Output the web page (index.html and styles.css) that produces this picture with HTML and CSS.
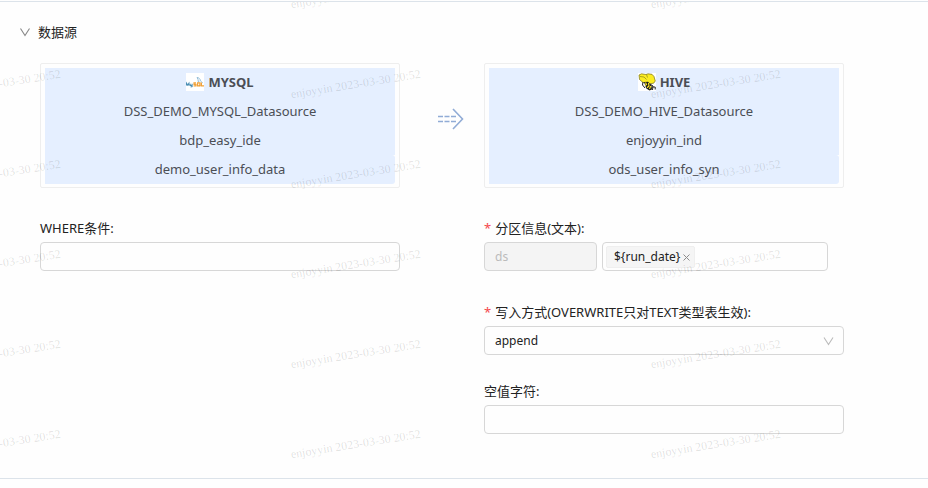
FILE: index.html
```html
<!DOCTYPE html>
<html lang="zh-CN">
<head>
<meta charset="utf-8">
<title>数据源</title>
<meta name="viewport" content="width=device-width, initial-scale=1">
<link rel="stylesheet" href="styles.css">
</head>
<body>
<main class="panel">
  <button class="panel-toggle" type="button" aria-expanded="true">
    <svg class="chevron" viewBox="0 0 12 12" width="12" height="12" aria-hidden="true"><path d="M.5 2.5 5 9.5 9.5 2.5"/></svg>
    <span>数据源</span>
  </button>
  <div class="mapping">
    <section class="side">
      <div class="card">
        <div class="row title">
          <svg width="18" height="18" viewBox="0 0 18 18" aria-hidden="true">
            <rect width="18" height="18" fill="#fff"/>
            <path d="M11 4.5c1.5 0 2.8 1 3.4 2.6.4 1.3.8 2 2.4 2.7M11 4.5l1 2 .4 2.5 1.1-1" fill="none" stroke="#7fb0cf" stroke-width=".8"/>
            <path d="M.5 12.5v-2.2l1.2 1.8 1.2-1.8v2.2M4.2 10.8v1.7h1.9v-1.7M6.1 12v1.6l-1.5.4" fill="none" stroke="#4c8fb5" stroke-width="1.1"/>
            <path d="M10 9.8H8v1.5h2v1.6H7.6M11.6 9.8h2.3v3h-2.3zM13 12l1.4 1.3M15.4 9.5v3.3H18" fill="none" stroke="#f0a13a" stroke-width="1.2"/>
          </svg>
          <strong>MYSQL</strong>
        </div>
        <div class="row">DSS_DEMO_MYSQL_Datasource</div>
        <div class="row">bdp_easy_ide</div>
        <div class="row">demo_user_info_data</div>
      </div>
      <div class="field">
        <label for="where">WHERE条件:</label>
        <input id="where" class="control" type="text">
      </div>
    </section>
    <div class="arrow">
      <svg width="26" height="22" viewBox="0 0 26 22" fill="none" stroke="#91acd6" stroke-width="1.6" aria-hidden="true">
        <path d="M0 8.5h18M0 13.5h18" stroke-dasharray="5 1.5"/>
        <path d="M15 1l9.5 10L15 21"/>
      </svg>
    </div>
    <section class="side">
      <div class="card">
        <div class="row title">
          <svg width="18" height="18" viewBox="0 0 18 18" aria-hidden="true">
            <rect width="18" height="18" fill="#fff"/>
            <path d="M1 2 3.5.8 8 1.5l2-.7 4 .5 2 2.2 1.3 4.5-1.6 2.2-3.7.6L9 9.8 5 9.6 1.5 6.5z" fill="#fbec23" stroke="#5d570f" stroke-width=".6"/>
            <path d="M2 3.5l4 .5 2.5 2.5M8.5 1.5l1 3" fill="none" stroke="#77701a" stroke-width=".6"/>
            <path d="M6 9l4-.3 3.5 3.8.5 4-2.5 1-3.2-2z" fill="#191919"/>
            <path d="M7.5 9.5l1 2-1.5 1M10.5 10l.5 3-2 1.8M12.8 13l-1.3 3" fill="none" stroke="#f6df25" stroke-width="1.2"/>
            <path d="M5 9l-.5 3L7 15M12 11l3 2-.5 4M14 14h3.2v2.5" fill="none" stroke="#222"/>
          </svg>
          <strong>HIVE</strong>
        </div>
        <div class="row">DSS_DEMO_HIVE_Datasource</div>
        <div class="row">enjoyyin_ind</div>
        <div class="row">ods_user_info_syn</div>
      </div>
      <div class="field partition">
        <label class="required" for="partition-value">分区信息(文本):</label>
        <div class="pair">
          <input class="control" type="text" value="ds" aria-label="分区字段" disabled>
          <div class="control tags">
            <span class="tag">${run_date}
              <button type="button" aria-label="移除"><svg width="7" height="7" viewBox="0 0 7 7" aria-hidden="true"><path d="M.5.5l6 6M6.5.5l-6 6"/></svg></button>
            </span>
            <input id="partition-value" type="text">
          </div>
        </div>
      </div>
      <div class="field">
        <label class="required" for="mode">写入方式(OVERWRITE只对TEXT类型表生效):</label>
        <div class="select">
          <select id="mode" class="control"><option>append</option></select>
          <svg class="chevron" viewBox="0 0 12 12" width="12" height="12" aria-hidden="true"><path d="M1 2.5 5.5 9.5 10 2.5"/></svg>
        </div>
      </div>
      <div class="field">
        <label for="null-char">空值字符:</label>
        <input id="null-char" class="control" type="text">
      </div>
    </section>
  </div>
  <div class="watermark" aria-hidden="true">
    <span>enjoyyin 2023-03-30 20:52</span><span>enjoyyin 2023-03-30 20:52</span><span>enjoyyin 2023-03-30 20:52</span>
    <span>enjoyyin 2023-03-30 20:52</span><span>enjoyyin 2023-03-30 20:52</span><span>enjoyyin 2023-03-30 20:52</span>
    <span>enjoyyin 2023-03-30 20:52</span><span>enjoyyin 2023-03-30 20:52</span><span>enjoyyin 2023-03-30 20:52</span>
    <span>enjoyyin 2023-03-30 20:52</span><span>enjoyyin 2023-03-30 20:52</span><span>enjoyyin 2023-03-30 20:52</span>
    <span>enjoyyin 2023-03-30 20:52</span><span>enjoyyin 2023-03-30 20:52</span><span>enjoyyin 2023-03-30 20:52</span>
    <span>enjoyyin 2023-03-30 20:52</span><span>enjoyyin 2023-03-30 20:52</span><span>enjoyyin 2023-03-30 20:52</span>
  </div>
</main>
</body>
</html>
```
FILE: styles.css
```css
* {
  box-sizing: border-box;
}

body {
  margin: 0;
  background: #fefefe;
  color: #222;
  font: 13px/18px "Noto Sans", "Noto Sans CJK SC", sans-serif;
}

button,
input,
select {
  font: inherit;
  color: inherit;
}

.panel {
  position: relative;
  overflow: hidden;
  margin-top: 1px;
  padding: 21px 84px 44px 20px;
  border-top: 1px solid #dce3ea;
  border-bottom: 1px solid #dce3ea;
}

.panel-toggle {
  display: flex;
  align-items: center;
  gap: 6px;
  padding: 0;
  border: 0;
  background: none;
}

.chevron {
  fill: none;
  stroke: #888;
  stroke-width: 1.1;
}

.mapping {
  display: grid;
  grid-template-columns: 1fr 84px 1fr;
  margin: 22px 0 0 20px;
}

.card {
  padding: 4px 4px 3px;
  border: 1px solid #eee;
  border-radius: 2px;
  margin-bottom: 31px;
}

.row {
  display: flex;
  align-items: center;
  justify-content: center;
  height: 29px;
  padding-bottom: 2px;
  background: #e5efff;
  color: #4b4e55;
}

.row:last-child {
  border-radius: 0 3px 3px 0;
}

.title {
  gap: 4px;
}

.arrow {
  display: flex;
  justify-content: flex-end;
  align-items: flex-start;
  padding: 45px 20px 0 0;
}

.field {
  display: flex;
  flex-direction: column;
  gap: 5px;
  margin-bottom: 27px;
}

.partition {
  margin-bottom: 32px;
}

.field:last-child {
  margin-bottom: 0;
}

.required::before {
  content: "*";
  margin-right: 4px;
  color: #f5484d;
}

.control {
  width: 100%;
  height: 29px;
  padding: 0 10px;
  border: 1px solid #d7d7d7;
  border-radius: 4px;
  background: transparent;
  font-size: 12px;
}

.control:disabled {
  background: #f4f4f4;
  color: #bbb;
}

.pair {
  display: grid;
  grid-template-columns: minmax(0, 1fr) minmax(0, 2fr);
  gap: 5px;
  margin-right: 16px;
}

.tags {
  display: flex;
  align-items: center;
  padding: 0 3px;
}

.tags input {
  flex: 1;
  min-width: 0;
  border: 0;
  padding: 0;
  background: none;
}

.tag {
  display: flex;
  align-items: center;
  gap: 3px;
  height: 22px;
  padding: 0 4px 0 7px;
  border: 1px solid #efefef;
  border-radius: 2px;
  background: #f5f5f5;
}

.tag button {
  display: flex;
  padding: 2px 0 0;
  border: 0;
  background: none;
}

.tag path {
  stroke: #8c8c8c;
}

.select {
  position: relative;
}

.select select {
  display: block;
  appearance: none;
}

.select .chevron {
  position: absolute;
  top: 9px;
  right: 9px;
  stroke: #bbb;
  pointer-events: none;
}

/* Tiled overlay above the whole panel */
.watermark {
  position: absolute;
  top: -53px;
  left: -184px;
  display: grid;
  grid-template-columns: repeat(3, 360px);
  grid-auto-rows: 90px;
  color: rgba(0, 0, 0, 0.13);
  font: 12px/14px "Liberation Serif", serif;
  pointer-events: none;
}

.watermark span {
  place-self: center;
  white-space: nowrap;
  transform: rotate(-9deg);
}
```
